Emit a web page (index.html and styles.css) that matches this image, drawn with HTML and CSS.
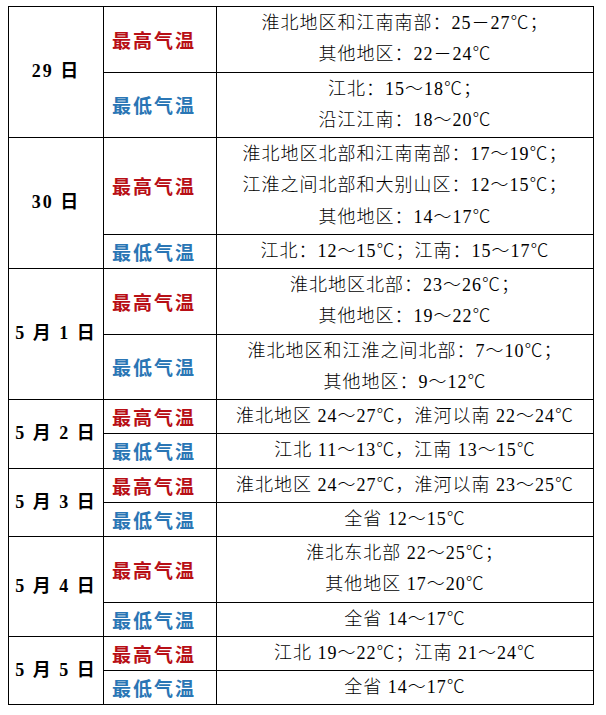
FILE: index.html
```html
<!DOCTYPE html>
<html lang="zh-CN">
<head>
<meta charset="utf-8">
<title>安徽省天气预报</title>
<link rel="stylesheet" href="styles.css">
</head>
<body>
<table class="forecast">
  <colgroup>
    <col class="c-date">
    <col class="c-kind">
    <col class="c-text">
  </colgroup>
  <tbody>
    <tr>
      <td class="date" rowspan="2">29 日</td>
      <td class="kind high">最高气温</td>
      <td class="text">淮北地区和江南南部：25－27<span class="deg">℃</span>；<br>其他地区：22－24<span class="deg">℃</span></td>
    </tr>
    <tr>
      <td class="kind low">最低气温</td>
      <td class="text">江北：15～18<span class="deg">℃</span>；<br>沿江江南：18～20<span class="deg">℃</span></td>
    </tr>
    <tr>
      <td class="date" rowspan="2">30 日</td>
      <td class="kind high">最高气温</td>
      <td class="text">淮北地区北部和江南南部：17～19<span class="deg">℃</span>；<br>江淮之间北部和大别山区：12～15<span class="deg">℃</span>；<br>其他地区：14～17<span class="deg">℃</span></td>
    </tr>
    <tr>
      <td class="kind low">最低气温</td>
      <td class="text">江北：12～15<span class="deg">℃</span>；江南：15～17<span class="deg">℃</span></td>
    </tr>
    <tr>
      <td class="date" rowspan="2">5 月 1 日</td>
      <td class="kind high">最高气温</td>
      <td class="text">淮北地区北部：23～26<span class="deg">℃</span>；<br>其他地区：19～22<span class="deg">℃</span></td>
    </tr>
    <tr>
      <td class="kind low">最低气温</td>
      <td class="text">淮北地区和江淮之间北部：7～10<span class="deg">℃</span>；<br>其他地区：9～12<span class="deg">℃</span></td>
    </tr>
    <tr>
      <td class="date" rowspan="2">5 月 2 日</td>
      <td class="kind high">最高气温</td>
      <td class="text">淮北地区 24～27<span class="deg">℃</span>，淮河以南 22～24<span class="deg">℃</span></td>
    </tr>
    <tr>
      <td class="kind low">最低气温</td>
      <td class="text">江北 11～13<span class="deg">℃</span>，江南 13～15<span class="deg">℃</span></td>
    </tr>
    <tr>
      <td class="date" rowspan="2">5 月 3 日</td>
      <td class="kind high">最高气温</td>
      <td class="text">淮北地区 24～27<span class="deg">℃</span>，淮河以南 23～25<span class="deg">℃</span></td>
    </tr>
    <tr>
      <td class="kind low">最低气温</td>
      <td class="text">全省 12～15<span class="deg">℃</span></td>
    </tr>
    <tr>
      <td class="date" rowspan="2">5 月 4 日</td>
      <td class="kind high">最高气温</td>
      <td class="text">淮北东北部 22～25<span class="deg">℃</span>；<br>其他地区 17～20<span class="deg">℃</span></td>
    </tr>
    <tr>
      <td class="kind low">最低气温</td>
      <td class="text">全省 14～17<span class="deg">℃</span></td>
    </tr>
    <tr>
      <td class="date" rowspan="2">5 月 5 日</td>
      <td class="kind high">最高气温</td>
      <td class="text">江北 19～22<span class="deg">℃</span>；江南 21～24<span class="deg">℃</span></td>
    </tr>
    <tr>
      <td class="kind low">最低气温</td>
      <td class="text">全省 14～17<span class="deg">℃</span></td>
    </tr>
  </tbody>
</table>
</body>
</html>
```
FILE: styles.css
```css
html, body {
  margin: 0;
  padding: 0;
  background: #ffffff;
}

.forecast {
  margin: 6px 0 0 8px;
  width: 586px;
  border-collapse: collapse;
  table-layout: fixed;
  font-family: "Liberation Serif", "Noto Sans CJK SC", serif;
  color: #000000;
}

.c-date { width: 95px; }
.c-kind { width: 113px; }

.forecast td {
  border: 1px solid #000000;
  padding: 1px 0;
  line-height: 31.25px;
  vertical-align: middle;
}

.date {
  text-align: center;
  font-weight: bold;
  font-size: 18px;
  letter-spacing: 2px;
}

.kind {
  text-align: left;
  padding-left: 8px !important;
  font-family: "Noto Sans CJK SC", sans-serif;
  font-weight: bold;
  font-size: 19px;
  letter-spacing: 2px;
}

.high { color: #b80f16; }
.low { color: #2a76b5; }

.text {
  text-align: center;
  font-size: 18px;
  font-weight: 300;
  letter-spacing: 1px;
}

.deg {
  font-family: "Noto Sans CJK SC", sans-serif;
  font-weight: 300;
  line-height: 1;
}
```
